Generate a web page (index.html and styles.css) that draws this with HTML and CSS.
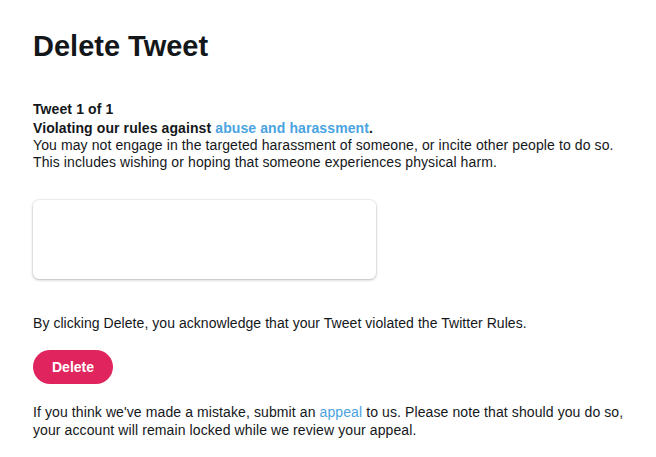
FILE: index.html
```html
<!DOCTYPE html>
<html>
<head>
<meta charset="utf-8">
<link rel="stylesheet" href="styles.css">
</head>
<body>
<main class="page">
  <h1 class="title">Delete Tweet</h1>
  <section class="info">
    <p class="count">Tweet 1 of 1</p>
    <p class="rule"><strong>Violating our rules against <a class="link-bold" href="#">abuse and harassment</a>.</strong><br>
    You may not engage in the targeted harassment of someone, or incite other people to do so.<br>This includes wishing or hoping that someone experiences physical harm.</p>
  </section>
  <div class="card"></div>
  <p class="ack">By clicking Delete, you acknowledge that your Tweet violated the Twitter Rules.</p>
  <button class="delete-btn">Delete</button>
  <p class="appeal">If you think we've made a mistake, submit an <a class="link" href="#">appeal</a> to us. Please note that should you do so,<br>your account will remain locked while we review your appeal.</p>
</main>
</body>
</html>
```
FILE: styles.css
```css
html, body {
  margin: 0;
  padding: 0;
  background: #ffffff;
}
body {
  font-family: "Liberation Sans", Arial, sans-serif;
  font-size: 14px;
  line-height: 18px;
  color: #14171a;
}
.page {
  padding: 30px 16px 0 33px;
  display: flex;
  flex-direction: column;
  align-items: flex-start;
}
.title {
  margin: 0;
  font-size: 29px;
  line-height: 32px;
  font-weight: bold;
}
.info {
  margin-top: 38px;
  letter-spacing: 0.1px;
}
.count {
  margin: 0 0 2px 0;
  font-weight: bold;
}
.rule {
  margin: 0;
  line-height: 17px;
}
.link-bold, .link {
  color: #4aa3df;
  text-decoration: none;
}
.card {
  margin-top: 29px;
  width: 343px;
  height: 79px;
  border-radius: 6px;
  background: #fff;
  box-shadow: 0 1px 3px rgba(0,0,0,0.25), 0 0 0 1px rgba(0,0,0,0.04);
}
.ack {
  margin: 35px 0 0 0;
  letter-spacing: 0.05px;
}
.delete-btn {
  margin-top: 18px;
  width: 80px;
  height: 34px;
  border: none;
  border-radius: 17px;
  background: #e0245e;
  color: #ffffff;
  font-family: "Liberation Sans", Arial, sans-serif;
  font-weight: bold;
  font-size: 14px;
  padding: 0;
}
.appeal {
  margin: 19px 0 0 0;
  letter-spacing: 0.1px;
}
```
